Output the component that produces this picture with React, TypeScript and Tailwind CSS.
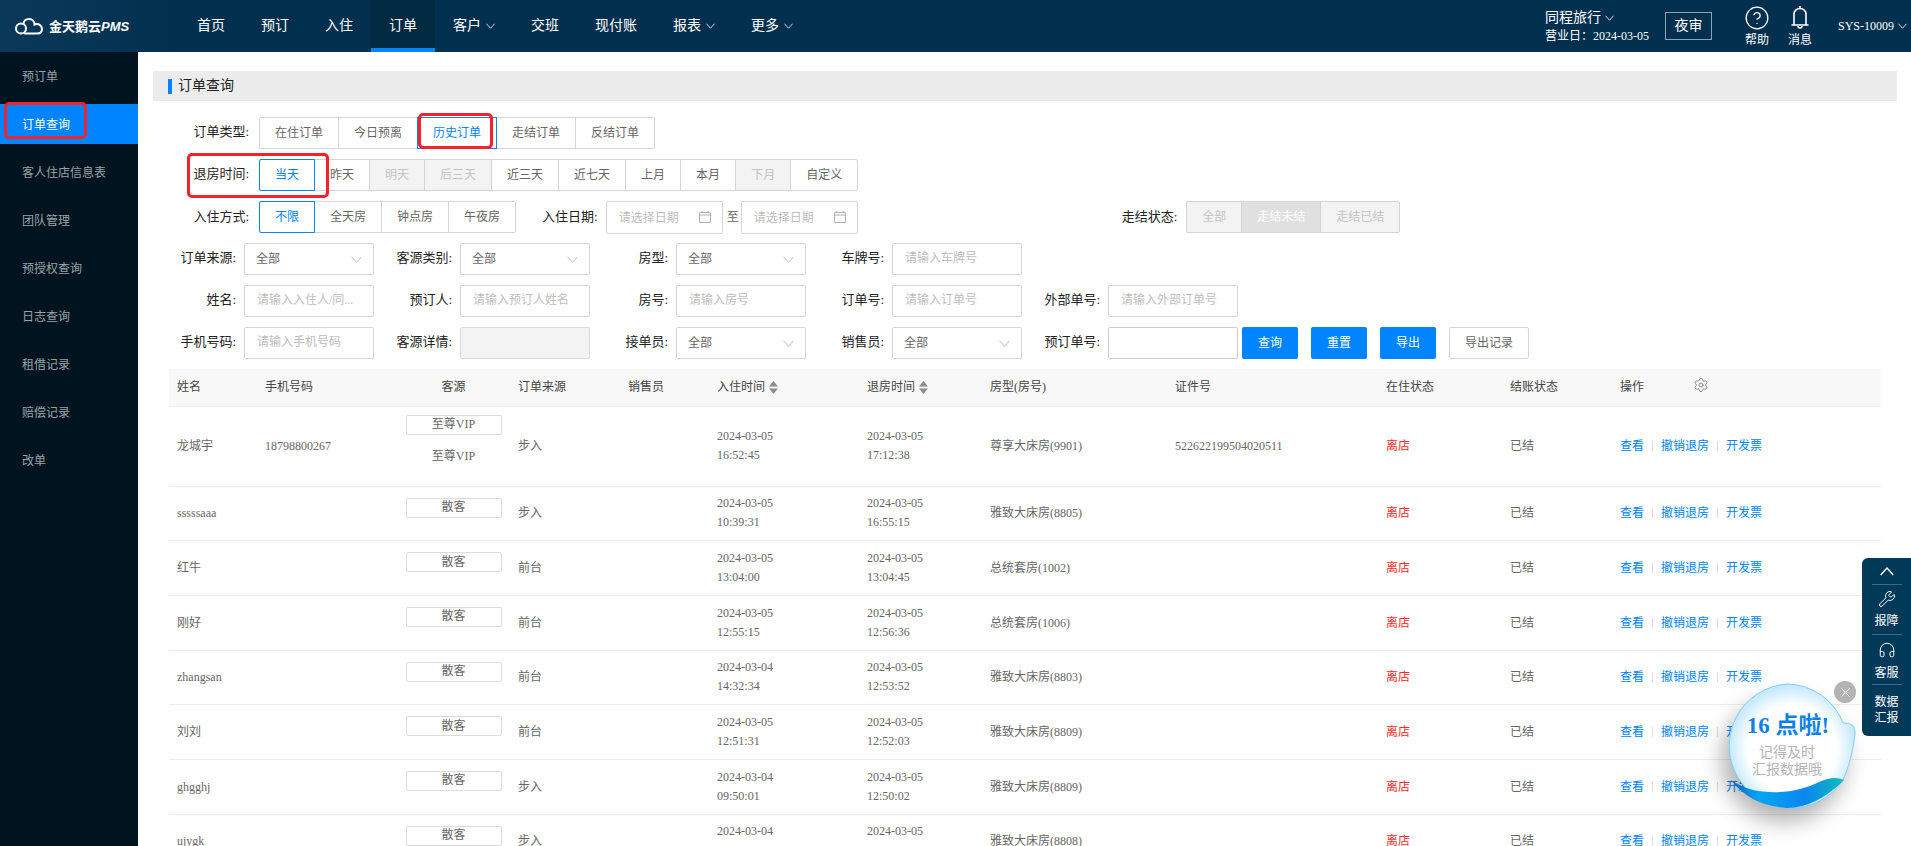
import { CircleHelp, Headphones, Settings, Wrench, X } from "lucide-react";

const NAV_ITEMS = [
  { label: "首页" },
  { label: "预订" },
  { label: "入住" },
  { label: "订单", active: true },
  { label: "客户", menu: true },
  { label: "交班" },
  { label: "现付账" },
  { label: "报表", menu: true },
  { label: "更多", menu: true },
];

const SIDE_ITEMS = ["预订单", "订单查询", "客人住店信息表", "团队管理", "预授权查询", "日志查询", "租借记录", "赔偿记录", "改单"];

const ROWS = [
  { name: "sssssaaa", phone: "", source: "步入", checkIn: ["2024-03-05", "10:39:31"], checkOut: ["2024-03-05", "16:55:15"], room: "雅致大床房(8805)" },
  { name: "红牛", phone: "", source: "前台", checkIn: ["2024-03-05", "13:04:00"], checkOut: ["2024-03-05", "13:04:45"], room: "总统套房(1002)" },
  { name: "刚好", phone: "", source: "前台", checkIn: ["2024-03-05", "12:55:15"], checkOut: ["2024-03-05", "12:56:36"], room: "总统套房(1006)" },
  { name: "zhangsan", phone: "", source: "前台", checkIn: ["2024-03-04", "14:32:34"], checkOut: ["2024-03-05", "12:53:52"], room: "雅致大床房(8803)" },
  { name: "刘刘", phone: "", source: "前台", checkIn: ["2024-03-05", "12:51:31"], checkOut: ["2024-03-05", "12:52:03"], room: "雅致大床房(8809)" },
  { name: "ghgghj", phone: "", source: "步入", checkIn: ["2024-03-04", "09:50:01"], checkOut: ["2024-03-05", "12:50:02"], room: "雅致大床房(8809)" },
  { name: "ujygk", phone: "", source: "步入", checkIn: ["2024-03-04", "09:48:12"], checkOut: ["2024-03-05", "12:49:20"], room: "雅致大床房(8808)" },
];

function Chevron({ className }: { className?: string }) {
  return (
    <svg viewBox="0 0 10 6" fill="none" stroke="currentColor" strokeWidth="0.9" className={className}>
      <path d="M0.5 0.5 L5 5.5 L9.5 0.5" />
    </svg>
  );
}

function SortIcon() {
  return (
    <svg viewBox="0 0 9 13" className="ml-1 inline-block h-[13px] w-[9px] fill-[#8c8c8c] align-[-3px]">
      <path d="M4.5 0 L9 5.5 H0 Z" />
      <path d="M4.5 13 L0 7.5 H9 Z" />
    </svg>
  );
}

function Segment({
  label,
  state,
  first,
  last,
}: {
  label: string;
  state?: "on" | "off" | "offOn";
  first?: boolean;
  last?: boolean;
}) {
  let look = "border-[#d4d4d4] bg-white text-[#666]";
  if (state === "on") look = "relative z-10 border-[#0084ff] bg-white text-[#0084ff]";
  if (state === "off") look = "border-[#d4d4d4] bg-[#f3f3f3] text-[#c4c4c4]";
  if (state === "offOn") look = "border-[#d4d4d4] bg-[#e0e0e0] text-white";

  return (
    <div
      className={`flex h-8 items-center border px-[15px] text-xs ${look} ${first ? "rounded-l-[2px]" : "-ml-px"} ${last ? "rounded-r-[2px]" : ""}`}
    >
      {label}
    </div>
  );
}

function Segments({ items }: { items: { label: string; state?: "on" | "off" | "offOn" }[] }) {
  return (
    <div className="flex">
      {items.map((item, i) => (
        <Segment key={item.label} {...item} first={i === 0} last={i === items.length - 1} />
      ))}
    </div>
  );
}

function Label({ children, className }: { children: string; className?: string }) {
  return <label className={`shrink-0 pb-[3px] text-right text-[13px] text-[#222] ${className ?? ""}`}>{children}</label>;
}

function Select() {
  return (
    <div className="flex h-8 w-[130px] items-center justify-between rounded-[2px] border border-[#d4d4d4] bg-white pl-[11px] pr-[11px] text-xs text-[#666]">
      <span>全部</span>
      <Chevron className="h-[7px] w-[11px] text-[#bdbdbd]" />
    </div>
  );
}

function TextInput({ placeholder, disabled, dark }: { placeholder?: string; disabled?: boolean; dark?: boolean }) {
  return (
    <input
      readOnly
      placeholder={placeholder}
      className={`h-8 w-[130px] rounded-[2px] border pb-[2px] pl-3 text-xs outline-none placeholder:text-[#bdbdbd] ${disabled ? "border-[#d9d9d9] bg-[#f3f3f3]" : "bg-white"} ${dark ? "border-[#cccccc]" : "border-[#d4d4d4]"}`}
    />
  );
}

function DateInput() {
  return (
    <div className="flex h-[33px] w-[117px] items-center justify-between rounded-[2px] border border-[#d4d4d4] pl-3 pr-[11px] text-xs text-[#bdbdbd]">
      <span>请选择日期</span>
      <svg viewBox="0 0 12 12" fill="none" stroke="#a8a8a8" strokeWidth="0.9" className="mb-[2px] h-3 w-3">
        <rect x="0.5" y="1.5" width="11" height="10" rx="0.5" />
        <path d="M0.5 4 H11.5 M3 0 V2 M9 0 V2" />
      </svg>
    </div>
  );
}

function Field({ label, children }: { label: string; children: React.ReactNode }) {
  return (
    <div className="flex w-[216px] shrink-0 items-center justify-end gap-2 pr-[2px]">
      <Label>{label}</Label>
      {children}
    </div>
  );
}

function ActionButton({ children, plain }: { children: string; plain?: boolean }) {
  return (
    <button
      className={`h-8 rounded-[2px] text-xs ${plain ? "ml-[13px] w-20 border border-[#d4d4d4] bg-white text-[#666]" : "ml-[13px] w-14 bg-[#0084ff] text-white first:ml-0"}`}
    >
      {children}
    </button>
  );
}

function Links() {
  return (
    <div className="flex items-center text-[#0084ff]">
      <a>查看</a>
      <span className="mx-2 h-[10px] w-px bg-[#dddddd]" />
      <a>撤销退房</a>
      <span className="mx-2 h-[10px] w-px bg-[#dddddd]" />
      <a>开发票</a>
    </div>
  );
}

function Tag({ children }: { children: string }) {
  return (
    <div className="mx-auto flex h-5 w-[96px] items-center justify-center rounded-[2px] border border-[#dcdcdc] bg-white pb-[1px] text-[#666]">
      {children}
    </div>
  );
}

function DateCell({ lines }: { lines: string[] }) {
  return (
    <div className="leading-[19px]">
      <div>{lines[0]}</div>
      <div>{lines[1]}</div>
    </div>
  );
}

function ReminderBubble() {
  return (
    <div className="absolute left-[1696px] top-[660px] z-20 h-[186px] w-[190px]">
      <svg viewBox="0 0 190 186" className="absolute inset-0 h-full w-full overflow-visible">
        <defs>
          <radialGradient id="bubbleFill" cx="50%" cy="52%" r="52%">
            <stop offset="0%" stopColor="#ffffff" />
            <stop offset="68%" stopColor="#ffffff" />
            <stop offset="100%" stopColor="#bfe7fb" />
          </radialGradient>
          <linearGradient id="waveFill" x1="0" y1="0" x2="1" y2="0">
            <stop offset="0%" stopColor="#0a63c0" />
            <stop offset="25%" stopColor="#08a6f5" />
            <stop offset="65%" stopColor="#0a86ee" />
            <stop offset="100%" stopColor="#12bcbc" />
          </linearGradient>
          <filter id="bubbleShadow" x="-40%" y="-40%" width="180%" height="180%">
            <feGaussianBlur stdDeviation="11" />
          </filter>
        </defs>
        <ellipse cx="88" cy="100" rx="62" ry="62" fill="#000" opacity="0.3" filter="url(#bubbleShadow)" />
        <path
          d="M91 24 A61 61 0 0 1 147 63 Q160 62 159 74 Q156 100 147 120 A62 62 0 1 1 91 24 Z"
          fill="url(#bubbleFill)"
          stroke="#7fd0f7"
          strokeWidth="1"
        />
        <path d="M35 120 C60 138 100 134 123 122 C134 117 141 117 148 120 Q120 148 91 148 Q55 146 35 120 Z" fill="url(#waveFill)" />
      </svg>
      <div className="absolute left-[30px] top-[52px] flex w-[124px] items-center justify-center whitespace-nowrap text-[23px] font-bold leading-7 text-[#0a80ea]">
        16 点啦!
      </div>
      <div className="absolute left-[30px] top-[83px] w-[122px] text-center font-['Noto_Sans_CJK_SC',sans-serif] text-[14px] leading-[17px] text-[#b4b4b4]">
        <div>记得及时</div>
        <div>汇报数据哦</div>
      </div>
      <div className="absolute left-[138px] top-[21px] flex h-[22px] w-[22px] items-center justify-center rounded-full bg-[#b3b3b3]">
        <X size={15} color="#fff" strokeWidth={1.6} />
      </div>
    </div>
  );
}

function SidePanel() {
  return (
    <div className="absolute right-0 top-[558px] z-20 flex h-[178px] w-[49px] flex-col items-center rounded-l-[6px] bg-[#013a58] text-xs leading-4 text-white">
      <div className="flex h-[27px] w-[30px] items-center justify-center border-b border-[#3c6a84]">
        <Chevron className="h-[9px] w-[14px] rotate-180" />
      </div>
      <div className="flex h-[50px] w-[30px] flex-col items-center border-b border-[#3c6a84] pt-[5px]">
        <Wrench size={18} strokeWidth={1.3} />
        <span className="mt-[5px]">报障</span>
      </div>
      <div className="flex h-[50px] w-[30px] flex-col items-center border-b border-[#3c6a84] pt-[6px]">
        <Headphones size={18} strokeWidth={1.3} />
        <span className="mt-[6px]">客服</span>
      </div>
      <div className="pt-[9px] text-center">
        <div>数据</div>
        <div>汇报</div>
      </div>
    </div>
  );
}

function Header() {
  return (
    <header className="flex h-[52px] shrink-0 items-stretch bg-[#01304f] text-white">
      <div className="flex w-[179px] items-center bg-gradient-to-r from-[#0a3859] to-[#01304f] pl-[15px]">
        <svg viewBox="0 0 28 17" fill="none" stroke="#fff" strokeWidth="2" className="h-[17px] w-[28px]">
          <circle cx="6" cy="10.5" r="5" />
          <path d="M8.5 6 C8.5 3 11 1 14 1 C17 1 19.5 3 19.5 6.5 C23.5 5 27 7.5 27 11 C27 14 25 15.5 22 15.5 H10" strokeLinecap="round" />
        </svg>
        <span className="ml-[6px] font-['Noto_Sans_CJK_SC',sans-serif] text-[13px] font-bold leading-none">
          金天鹅云<span className="font-['Liberation_Sans',sans-serif] italic">PMS</span>
        </span>
      </div>

      <nav className="flex items-stretch text-sm">
        {NAV_ITEMS.map((item) => (
          <div
            key={item.label}
            className={`flex items-center px-[18px] pb-[1px] ${item.active ? "border-b-4 border-[#0084ff] bg-[#012a43] pt-1" : ""}`}
          >
            {item.label}
            {item.menu ? <Chevron className="ml-[5px] h-[6px] w-[9px]" /> : null}
          </div>
        ))}
      </nav>

      <div className="ml-auto flex items-center">
        <div className="mr-[16px] text-white">
          <div className="flex items-center text-sm leading-[18px]">
            同程旅行
            <Chevron className="ml-[4px] h-[6px] w-[9px]" />
          </div>
          <div className="mt-[1px] text-xs leading-4">营业日：2024-03-05</div>
        </div>
        <div className="flex h-[28px] w-[47px] items-center justify-center border border-[#8ba3b3] text-sm">夜审</div>
        <div className="ml-[32px] flex flex-col items-center">
          <CircleHelp size={26} strokeWidth={1.2} />
          <span className="mt-[1px] text-xs leading-4">帮助</span>
        </div>
        <div className="ml-[18px] flex flex-col items-center">
          <svg viewBox="0 0 20 25" fill="none" stroke="#fff" strokeWidth="1.6" className="h-[25px] w-5">
            <path d="M10 1 V3.5 M4 19.5 V9 A6 5.5 0 0 1 16 9 V19.5 M1.5 20 H18.5 M8 21 A2 2 0 0 0 12 21" />
          </svg>
          <span className="mt-[2px] text-xs leading-4">消息</span>
        </div>
        <div className="ml-[26px] mr-1 flex items-center text-xs">
          SYS-10009
          <Chevron className="ml-[4px] h-[6px] w-[9px]" />
        </div>
      </div>
    </header>
  );
}

function Filters() {
  return (
    <div className="mt-4 flex flex-col gap-[10px]">
      <div className="flex items-center">
        <Label className="mr-[10px] w-[96px]">订单类型:</Label>
        <Segments
          items={[{ label: "在住订单" }, { label: "今日预离" }, { label: "历史订单", state: "on" }, { label: "走结订单" }, { label: "反结订单" }]}
        />
      </div>
      <div className="flex items-center">
        <Label className="mr-[10px] w-[96px]">退房时间:</Label>
        <Segments
          items={[
            { label: "当天", state: "on" },
            { label: "昨天" },
            { label: "明天", state: "off" },
            { label: "后三天", state: "off" },
            { label: "近三天" },
            { label: "近七天" },
            { label: "上月" },
            { label: "本月" },
            { label: "下月", state: "off" },
            { label: "自定义" },
          ]}
        />
      </div>
      <div className="flex h-8 items-start">
        <Label className="mr-[10px] mt-[6px] w-[96px]">入住方式:</Label>
        <Segments items={[{ label: "不限", state: "on" }, { label: "全天房" }, { label: "钟点房" }, { label: "午夜房" }]} />
        <Label className="ml-[26px] mr-2 mt-[6px]">入住日期:</Label>
        <DateInput />
        <span className="ml-1 mr-[2px] mt-2 text-xs text-[#666]">至</span>
        <DateInput />
        <Label className="ml-[264px] mr-[9px] mt-[6px]">走结状态:</Label>
        <Segments items={[{ label: "全部", state: "off" }, { label: "走结未结", state: "offOn" }, { label: "走结已结", state: "off" }]} />
      </div>
      <div className="flex">
        <div className="w-[7px] shrink-0" />
        <Field label="订单来源:"><Select /></Field>
        <Field label="客源类别:"><Select /></Field>
        <Field label="房型:"><Select /></Field>
        <Field label="车牌号:"><TextInput placeholder="请输入车牌号" /></Field>
      </div>
      <div className="flex">
        <div className="w-[7px] shrink-0" />
        <Field label="姓名:"><TextInput placeholder="请输入入住人/同..." /></Field>
        <Field label="预订人:"><TextInput placeholder="请输入预订人姓名" /></Field>
        <Field label="房号:"><TextInput placeholder="请输入房号" /></Field>
        <Field label="订单号:"><TextInput placeholder="请输入订单号" /></Field>
        <Field label="外部单号:"><TextInput placeholder="请输入外部订单号" /></Field>
      </div>
      <div className="flex">
        <div className="w-[7px] shrink-0" />
        <Field label="手机号码:"><TextInput placeholder="请输入手机号码" /></Field>
        <Field label="客源详情:"><TextInput disabled /></Field>
        <Field label="接单员:"><Select /></Field>
        <Field label="销售员:"><Select /></Field>
        <Field label="预订单号:"><TextInput dark /></Field>
        <div className="ml-[2px] flex">
          <ActionButton>查询</ActionButton>
          <ActionButton>重置</ActionButton>
          <ActionButton>导出</ActionButton>
          <ActionButton plain>导出记录</ActionButton>
        </div>
      </div>
    </div>
  );
}

function OrderTable() {
  return (
    <table className="ml-4 mt-[10px] w-[1712px] table-fixed border-collapse text-left text-xs text-[#666]">
      <colgroup>
        <col className="w-[88px]" />
        <col className="w-[140px]" />
        <col className="w-[113px]" />
        <col className="w-[110px]" />
        <col className="w-[89px]" />
        <col className="w-[150px]" />
        <col className="w-[123px]" />
        <col className="w-[185px]" />
        <col className="w-[211px]" />
        <col className="w-[124px]" />
        <col className="w-[110px]" />
        <col />
      </colgroup>
      <thead>
        <tr className="h-[37px] border-b border-[#ececec] bg-[#f8f8f8] [&>th]:pl-2 [&>th]:font-normal [&>th]:text-[#444]">
          <th>姓名</th>
          <th>手机号码</th>
          <th className="pr-2 text-center">客源</th>
          <th>订单来源</th>
          <th>销售员</th>
          <th>入住时间<SortIcon /></th>
          <th>退房时间<SortIcon /></th>
          <th>房型(房号)</th>
          <th>证件号</th>
          <th>在住状态</th>
          <th>结账状态</th>
          <th>
            <div className="flex items-center">
              操作
              <Settings size={16} strokeWidth={1.1} color="#666" className="ml-[49px] -mt-1" />
            </div>
          </th>
        </tr>
      </thead>
      <tbody className="[&>tr>td]:pl-2 [&>tr]:border-b [&>tr]:border-[#ececec]">
        <tr className="h-[80px]">
          <td>龙城宇</td>
          <td>18798800267</td>
          <td className="pr-2 pt-2 align-top">
            <Tag>至尊VIP</Tag>
            <div className="mt-[13px] text-center">至尊VIP</div>
          </td>
          <td>步入</td>
          <td />
          <td><DateCell lines={["2024-03-05", "16:52:45"]} /></td>
          <td><DateCell lines={["2024-03-05", "17:12:38"]} /></td>
          <td>尊享大床房(9901)</td>
          <td>522622199504020511</td>
          <td className="text-[#ff2a2a]">离店</td>
          <td>已结</td>
          <td><Links /></td>
        </tr>
        {ROWS.map((row) => (
          <tr key={row.name} className="h-[54.7px]">
            <td>{row.name}</td>
            <td>{row.phone}</td>
            <td className="pr-2 pt-[11px] align-top"><Tag>散客</Tag></td>
            <td>{row.source}</td>
            <td />
            <td><DateCell lines={row.checkIn} /></td>
            <td><DateCell lines={row.checkOut} /></td>
            <td>{row.room}</td>
            <td />
            <td className="text-[#ff2a2a]">离店</td>
            <td>已结</td>
            <td><Links /></td>
          </tr>
        ))}
      </tbody>
    </table>
  );
}

export default function App() {
  return (
    <div className="relative flex h-screen flex-col overflow-hidden bg-white font-['Liberation_Serif','Noto_Sans_CJK_SC',serif]">
      <Header />
      <div className="flex min-h-0 flex-1">
        <aside className="w-[138px] shrink-0 bg-[#00141f] pt-1 text-xs">
          {SIDE_ITEMS.map((item) => (
            <div
              key={item}
              className={`mb-2 flex h-10 items-center pl-[22px] pt-[2px] ${item === "订单查询" ? "bg-[#0084ff] text-white" : "text-[#9aa3a9]"}`}
            >
              {item}
            </div>
          ))}
        </aside>
        <main className="min-w-0 flex-1 pl-[15px] pt-[19px]">
          <div className="mr-[14px] flex h-[30px] items-center bg-[#ececec] pl-[15px] text-sm text-[#222]">
            <span className="mr-[6px] h-[15px] w-1 bg-[#0084ff]" />
            订单查询
          </div>
          <Filters />
          <OrderTable />
        </main>
      </div>

      <SidePanel />
      <ReminderBubble />

      <div className="pointer-events-none absolute left-1 top-[102px] z-20 h-[37px] w-[83px] rounded-[5px] border-[3px] border-[#f5222d]" />
      <div className="pointer-events-none absolute left-[418px] top-[113px] z-20 h-[36px] w-[75px] rounded-[5px] border-[3px] border-[#f5222d]" />
      <div className="pointer-events-none absolute left-[187px] top-[153px] z-20 h-[45px] w-[142px] rounded-[5px] border-[3px] border-[#f5222d]" />
    </div>
  );
}
